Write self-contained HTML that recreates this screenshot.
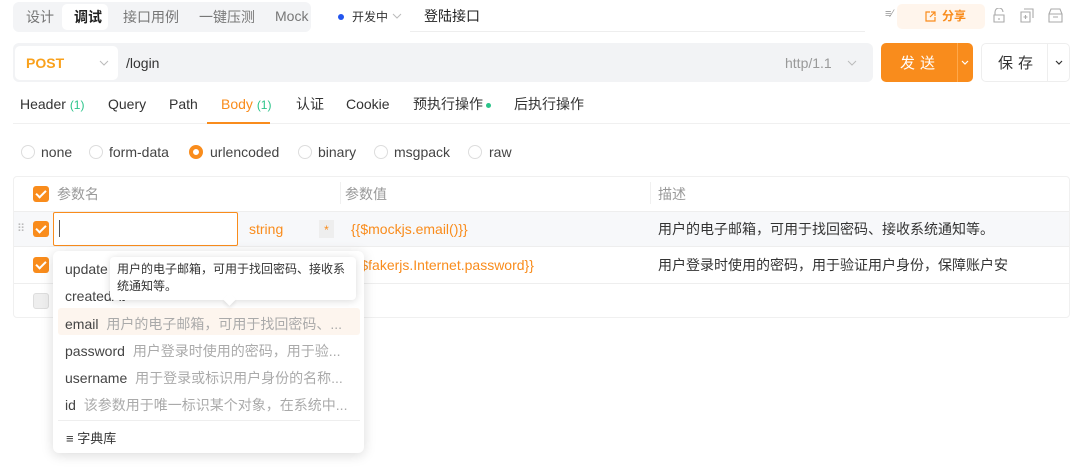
<!DOCTYPE html>
<html><head><meta charset="utf-8"><style>
*{box-sizing:border-box;margin:0;padding:0}
body{width:1080px;height:473px;background:#fff;font-family:"Liberation Sans","Noto Sans CJK SC",sans-serif;font-size:14px;color:#333;position:relative;overflow:hidden}
.a{position:absolute;white-space:nowrap}
.cb{position:absolute;width:16px;height:16px;border-radius:3px;background:#f98c1c}
.cb:after{content:"";position:absolute;left:5px;top:2px;width:4px;height:8px;border:solid #fff;border-width:0 2px 2px 0;transform:rotate(45deg)}
.rd{position:absolute;width:14px;height:14px;border-radius:50%;border:1px solid #ddd;top:145px}
.g{color:#999}
.chev{position:absolute;width:10px;height:6px}
</style></head><body>
<!-- top tabs -->
<div class="a" style="left:13px;top:2px;width:298px;height:30px;background:#f3f4f6;border-radius:6px"></div>
<div class="a" style="left:62px;top:4px;width:46px;height:26px;background:#fff;border-radius:5px"></div>
<div class="a" style="left:26px;top:7px;color:#777">设计</div>
<div class="a" style="left:74px;top:7px;color:#222;font-weight:bold">调试</div>
<div class="a" style="left:123px;top:7px;color:#777">接口用例</div>
<div class="a" style="left:199px;top:7px;color:#777">一键压测</div>
<div class="a" style="left:275px;top:8px;color:#777">Mock</div>
<div class="a" style="left:338px;top:14px;width:6px;height:6px;border-radius:50%;background:#2255ee"></div>
<div class="a" style="left:352px;top:8px;font-size:12px;color:#333">开发中</div>
<svg class="chev" style="left:392px;top:13px" viewBox="0 0 10 6"><path d="M1 1l4 4 4-4" fill="none" stroke="#bbb" stroke-width="1"/></svg>
<div class="a" style="left:424px;top:6px;color:#222">登陆接口</div>
<div class="a" style="left:410px;top:31px;width:455px;height:1px;background:#eee"></div>
<div class="a" style="left:885px;top:8px;font-size:11px;color:#999">≡⁄</div>
<div class="a" style="left:897px;top:4px;width:88px;height:25px;background:#fff5ec;border-radius:5px"></div>
<svg class="a" style="left:925px;top:11px" width="11" height="11" viewBox="0 0 11 11"><path d="M5 1H1v9h9V6M6 1h4v4M10 1L5 6" fill="none" stroke="#f98c1c" stroke-width="1.2"/></svg>
<div class="a" style="left:942px;top:7px;font-size:12px;color:#f98c1c;font-weight:bold">分享</div>
<svg class="a" style="left:992px;top:8px" width="14" height="15" viewBox="0 0 14 15"><path d="M3 7V4a4 4 0 0 1 8 0M2 7h10v7H2zM7 10v2" fill="none" stroke="#aaa" stroke-width="1.1"/></svg>
<svg class="a" style="left:1020px;top:8px" width="15" height="15" viewBox="0 0 15 15"><path d="M4 1h9v9M1 4h9v10H1zM5.5 7v4M3.5 9h4" fill="none" stroke="#aaa" stroke-width="1.1"/></svg>
<svg class="a" style="left:1048px;top:8px" width="15" height="15" viewBox="0 0 15 15"><path d="M1 6l2-5h9l2 5v8H1zM1 6h13M5 9h5" fill="none" stroke="#aaa" stroke-width="1.1"/></svg>
<!-- url bar -->
<div class="a" style="left:13px;top:43px;width:860px;height:39px;background:#f2f3f5;border-radius:6px"></div>
<div class="a" style="left:15px;top:46px;width:103px;height:34px;background:#fff;border-radius:5px"></div>
<div class="a" style="left:26px;top:55px;color:#f9a11c;font-weight:bold">POST</div>
<svg class="chev" style="left:99px;top:60px" viewBox="0 0 10 6"><path d="M1 1l4 4 4-4" fill="none" stroke="#bbb" stroke-width="1"/></svg>
<div class="a" style="left:126px;top:55px;color:#333">/login</div>
<div class="a" style="left:785px;top:55px;color:#999">http/1.1</div>
<svg class="chev" style="left:847px;top:60px" viewBox="0 0 10 6"><path d="M1 1l4 4 4-4" fill="none" stroke="#bbb" stroke-width="1"/></svg>
<div class="a" style="left:881px;top:43px;width:92px;height:39px;background:#f98c1c;border-radius:5px"></div>
<div class="a" style="left:957px;top:43px;width:1px;height:39px;background:#ffa84a"></div>
<div class="a" style="left:900px;top:52px;color:#fff;letter-spacing:5px;font-size:15px">发送</div>
<svg class="chev" style="left:960px;top:60px" viewBox="0 0 10 6"><path d="M2 1l3 3 3-3" fill="none" stroke="#fff" stroke-width="1.2"/></svg>
<div class="a" style="left:981px;top:43px;width:89px;height:39px;border:1px solid #eee;border-radius:5px"></div>
<div class="a" style="left:1047px;top:44px;width:1px;height:37px;background:#eee"></div>
<div class="a" style="left:998px;top:52px;color:#333;letter-spacing:5px;font-size:15px">保存</div>
<svg class="chev" style="left:1054px;top:60px" viewBox="0 0 10 6"><path d="M2 1l3 3 3-3" fill="none" stroke="#333" stroke-width="1.2"/></svg>
<!-- tabs -->
<div class="a" style="left:20px;top:96px">Header <span style="color:#2bc48a;font-size:12px">(1)</span></div>
<div class="a" style="left:108px;top:96px">Query</div>
<div class="a" style="left:169px;top:96px">Path</div>
<div class="a" style="left:221px;top:96px;color:#f98c1c">Body <span style="color:#2bc48a;font-size:12px">(1)</span></div>
<div class="a" style="left:296px;top:94px">认证</div>
<div class="a" style="left:346px;top:96px">Cookie</div>
<div class="a" style="left:413px;top:94px">预执行操作</div>
<div class="a" style="left:486px;top:103px;width:5px;height:5px;border-radius:50%;background:#2bc48a"></div>
<div class="a" style="left:514px;top:94px">后执行操作</div>
<div class="a" style="left:13px;top:123px;width:1057px;height:1px;background:#f0f0f0"></div>
<div class="a" style="left:207px;top:122px;width:63px;height:2px;background:#f98c1c"></div>
<!-- radios -->
<div class="rd" style="left:21px"></div><div class="a" style="left:41px;top:144px;color:#444">none</div>
<div class="rd" style="left:89px"></div><div class="a" style="left:109px;top:144px;color:#444">form-data</div>
<div class="rd" style="left:189px;border:4px solid #f98c1c;background:#fff"></div><div class="a" style="left:210px;top:144px;color:#444">urlencoded</div>
<div class="rd" style="left:298px"></div><div class="a" style="left:318px;top:144px;color:#444">binary</div>
<div class="rd" style="left:374px"></div><div class="a" style="left:394px;top:144px;color:#444">msgpack</div>
<div class="rd" style="left:468px"></div><div class="a" style="left:489px;top:144px;color:#444">raw</div>
<!-- table -->
<div class="a" style="left:13px;top:176px;width:1057px;height:142px;border:1px solid #f0f0f0;border-radius:4px"></div>
<div class="a" style="left:14px;top:211px;width:1055px;height:36px;background:#f7f8fa;border-top:1px solid #eee;border-bottom:1px solid #eee"></div>
<div class="a" style="left:14px;top:283px;width:1055px;height:1px;background:#eee"></div>
<div class="a" style="left:340px;top:182px;width:1px;height:22px;background:#f0f0f0"></div>
<div class="a" style="left:650px;top:182px;width:1px;height:22px;background:#f0f0f0"></div>
<div class="cb" style="left:33px;top:186px"></div>
<div class="a g" style="left:57px;top:184px">参数名</div>
<div class="a g" style="left:345px;top:184px">参数值</div>
<div class="a g" style="left:658px;top:184px">描述</div>
<div class="a" style="left:17px;top:222px;color:#bbb;font-size:11px">⠿</div>
<div class="cb" style="left:33px;top:221px"></div>
<div class="a" style="left:53px;top:212px;width:185px;height:34px;border:1px solid #f98c1c;border-radius:2px;background:#fff"></div>
<div class="a" style="left:59px;top:220px;width:1px;height:17px;background:#555"></div>
<div class="a" style="left:249px;top:221px;color:#f98c1c">string</div>
<div class="a" style="left:319px;top:220px;width:15px;height:18px;background:#eee;color:#f98c1c;font-size:12px;text-align:center;line-height:20px">*</div>
<div class="a" style="left:351px;top:221px;color:#f98c1c;font-size:14px">{{$mockjs.email()}}</div>
<div class="a" style="left:658px;top:219px;font-size:14px">用户的电子邮箱，可用于找回密码、接收系统通知等。</div>
<div class="cb" style="left:33px;top:257px"></div>
<div class="a" style="left:351px;top:257px;color:#f98c1c;font-size:14px">{{$fakerjs.Internet.password}}</div>
<div class="a" style="left:658px;top:255px;font-size:14px">用户登录时使用的密码，用于验证用户身份，保障账户安</div>
<div class="a" style="left:33px;top:293px;width:16px;height:16px;border-radius:3px;background:#eee;border:1px solid #ddd"></div>
<!-- dropdown -->
<div class="a" style="left:53px;top:251px;width:311px;height:202px;background:#fff;border-radius:6px;box-shadow:0 2px 12px rgba(0,0,0,.15)"></div>
<div class="a" style="left:65px;top:261px;color:#444">update</div>
<div class="a" style="left:65px;top:288px;color:#444">createdAt</div>
<div class="a" style="left:58px;top:308px;width:302px;height:27px;background:#fdf5ee;border-radius:3px"></div>
<div class="a" style="left:65px;top:314px;color:#444">email <span style="color:#aaa;margin-left:4px">用户的电子邮箱，可用于找回密码、...</span></div>
<div class="a" style="left:65px;top:341px;color:#444">password <span style="color:#aaa;margin-left:4px">用户登录时使用的密码，用于验...</span></div>
<div class="a" style="left:65px;top:368px;color:#444">username <span style="color:#aaa;margin-left:4px">用于登录或标识用户身份的名称...</span></div>
<div class="a" style="left:65px;top:395px;color:#444">id <span style="color:#aaa;margin-left:4px">该参数用于唯一标识某个对象，在系统中...</span></div>
<div class="a" style="left:58px;top:420px;width:302px;height:1px;background:#eee"></div>
<div class="a" style="left:66px;top:428px;color:#333;font-size:13px">≡ 字典库</div>
<!-- tooltip -->
<div class="a" style="left:110px;top:257px;width:246px;height:43px;background:#fff;border-radius:4px;box-shadow:0 1px 8px rgba(0,0,0,.15)"></div>
<div class="a" style="left:225px;top:295px;width:9px;height:9px;background:#fff;transform:rotate(45deg);box-shadow:2px 2px 3px rgba(0,0,0,.08)"></div>
<div class="a" style="left:117px;top:261px;font-size:12px;color:#333;line-height:17px;white-space:normal;width:235px">用户的电子邮箱，可用于找回密码、接收系统通知等。</div>
</body></html>
